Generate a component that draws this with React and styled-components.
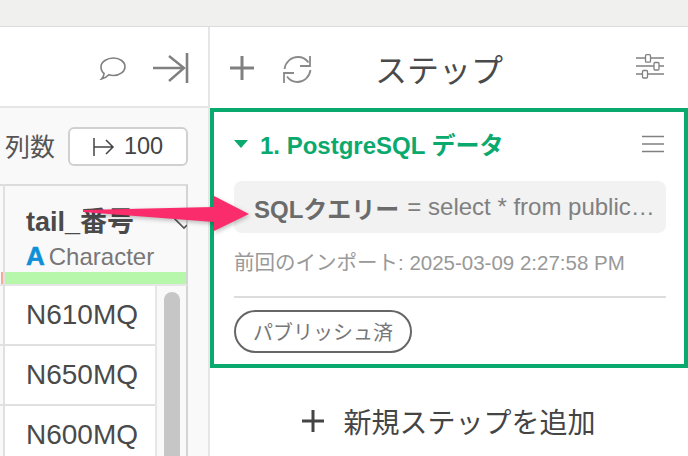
import React from "react";
import styled, { createGlobalStyle } from "styled-components";

const GlobalStyle = createGlobalStyle`
  html, body {
    margin: 0;
    padding: 0;
    background: #fff;
    font-family: "Liberation Sans", "Noto Sans CJK JP", sans-serif;
  }
`;

const Page = styled.div`
  position: relative;
  width: 688px;
  height: 456px;
  overflow: hidden;
  display: flex;
  flex-direction: column;
`;

const TopBar = styled.div`
  height: 26px;
  flex: none;
  background: #f0f0ef;
  border-bottom: 1px solid #dcdcdc;
`;

const Main = styled.div`
  flex: 1;
  min-height: 0;
  display: flex;
`;

const LeftPane = styled.div`
  width: 208px;
  flex: none;
  display: flex;
  flex-direction: column;
  border-right: 2px solid #e6e6e6;
`;

const LeftHeader = styled.div`
  height: 76px;
  flex: none;
  display: flex;
  align-items: center;
  justify-content: flex-end;
  gap: 26px;
  padding: 3px 19px 0 0;
  border-bottom: 2px solid #e6e6e6;
`;

const LeftBody = styled.div`
  flex: 1;
  min-height: 0;
  background: #f9f9f9;
  display: flex;
  flex-direction: column;
  overflow: hidden;
`;

const RowCount = styled.div`
  height: 76px;
  flex: none;
  display: flex;
  align-items: flex-start;
  padding: 19px 0 0 5px;
  box-sizing: border-box;
  gap: 13px;
`;

const CountLabel = styled.span`
  font-size: 25px;
  line-height: 40px;
  color: #555;
`;

const CountButton = styled.div`
  width: 120px;
  height: 39px;
  box-sizing: border-box;
  border: 2px solid #d0d0d0;
  border-radius: 6px;
  background: #fff;
  display: flex;
  align-items: center;
  justify-content: center;
  gap: 9px;
  font-size: 23.5px;
  color: #444;
`;

const Table = styled.div`
  display: grid;
  grid-template-columns: 3px 184px;
  align-items: stretch;
`;

const PrevColumn = styled.div`
  display: flex;
  flex-direction: column;
  border-right: 2px solid #e0e0e0;
  width: 3px;
  box-sizing: content-box;
`;

const PrevHeader = styled.div`
  height: 102px;
  flex: none;
  box-sizing: border-box;
  border-top: 2px solid #dcdcdc;
  border-bottom: 2px solid #e6e6e6;
  display: flex;
  flex-direction: column;
  justify-content: flex-end;
`;

const PrevBar = styled.div`
  height: 12px;
  margin-left: 1px;
  background: #f4a999;
`;

const PrevCell = styled.div`
  height: 58px;
  flex: none;
  border-bottom: 2px solid #e0e0e0;
`;

const Column = styled.div`
  margin-left: 2px;
  width: 183px;
  display: flex;
  flex-direction: column;
`;

const HeaderCell = styled.div`
  height: 102px;
  flex: none;
  box-sizing: border-box;
  border-top: 2px solid #dcdcdc;
  border-right: 2px solid #d4d4d4;
  border-bottom: 2px solid #e6e6e6;
  display: flex;
  flex-direction: column;
  position: relative;
`;

const ColumnName = styled.div`
  font-size: 27px;
  font-weight: 700;
  line-height: 30px;
  color: #4a4a4a;
  padding: 21px 0 0 21px;
`;

const TypeRow = styled.div`
  display: flex;
  align-items: center;
  gap: 4px;
  padding: 6px 0 0 21px;
  font-size: 24px;
  line-height: 27px;
  color: #777;
`;

const TypeBadge = styled.span`
  color: #0f8fd8;
  font-weight: 700;
  font-size: 26px;
  -webkit-text-stroke: 0.5px #0f8fd8;
`;

const Quality = styled.div`
  margin-top: auto;
  height: 12px;
  background: #b6f7ac;
`;

const Chevron = styled.svg`
  position: absolute;
  left: 169px;
  top: 31px;
`;

const BodyRow = styled.div`
  display: flex;
  border-right: 2px solid #d4d4d4;
`;

const Cells = styled.div`
  width: 150px;
  flex: none;
  border-right: 2px solid #e6e6e6;
  background: #fff;
`;

const Cell = styled.div`
  height: 58px;
  border-bottom: 2px solid #e0e0e0;
  display: flex;
  align-items: center;
  padding-left: 21px;
  font-size: 28px;
  color: #4a4a4a;
`;

const ScrollTrack = styled.div`
  flex: 1;
  padding: 6px 6px 0 7px;
`;

const ScrollThumb = styled.div`
  height: 240px;
  border-radius: 8px;
  background: #c6c6c6;
`;

const RightPane = styled.div`
  flex: 1;
  min-width: 0;
  display: flex;
  flex-direction: column;
`;

const RightHeader = styled.div`
  height: 80px;
  flex: none;
  display: flex;
  align-items: center;
  padding: 1px 24px 0 20px;
  gap: 29px;
`;

const StepTitle = styled.div`
  flex: 1;
  font-size: 32px;
  color: #4a4a4a;
  padding-left: 33px;
`;

const StepCard = styled.div`
  height: 260px;
  flex: none;
  box-sizing: border-box;
  border: 4px solid #0aa96e;
  padding: 0 18px 0 20px;
  display: flex;
  flex-direction: column;
`;

const CardHead = styled.div`
  height: 64px;
  flex: none;
  margin-bottom: 5px;
  display: flex;
  align-items: center;
  gap: 12px;
  padding-right: 2px;
`;

const CardTitle = styled.div`
  flex: 1;
  font-size: 24px;
  font-weight: 700;
  color: #0aa96e;
  padding-bottom: 2px;
`;

const QueryBox = styled.div`
  height: 52px;
  flex: none;
  border-radius: 8px;
  background: #f2f2f2;
  display: flex;
  align-items: center;
  padding-left: 20px;
  white-space: nowrap;
  overflow: hidden;
`;

const QueryKey = styled.span`
  font-size: 24px;
  font-weight: 700;
  color: #6b6b6b;
`;

const QueryValue = styled.span`
  font-size: 24px;
  color: #808080;
  margin-left: 8px;
`;

const ImportedAt = styled.div`
  margin-top: 17px;
  font-size: 20.5px;
  line-height: 26px;
  color: #999;
  white-space: nowrap;
`;

const CardRule = styled.div`
  margin-top: 20px;
  height: 2px;
  background: #dcdcdc;
`;

const PublishedTag = styled.div`
  margin-top: 12px;
  align-self: flex-start;
  height: 43px;
  width: 178px;
  box-sizing: border-box;
  border: 2px solid #666;
  border-radius: 22px;
  display: flex;
  align-items: center;
  justify-content: center;
  font-size: 20px;
  color: #777;
`;

const AddStep = styled.div`
  flex: 1;
  display: flex;
  align-items: center;
  justify-content: center;
  gap: 19px;
  font-size: 28px;
  color: #444;
  padding-top: 18px;
`;

const Arrow = styled.svg`
  position: absolute;
  left: 80px;
  top: 190px;
  filter: drop-shadow(1px 2px 2px rgba(0, 0, 0, 0.25));
`;

const Icon = ({ w, h, children, sw = 2, color = "#808080" }) => (
  <svg width={w} height={h} viewBox={`0 0 ${w} ${h}`} fill="none" stroke={color} strokeWidth={sw}>
    {children}
  </svg>
);

export default function App() {
  return (
    <Page>
      <GlobalStyle />
      <TopBar />
      <Main>
        <LeftPane>
          <LeftHeader>
            <Icon w={28} h={24} sw={1.6}>
              <path d="M14.500 2c6.300 0 11.500 3.800 11.500 8.700s-5.200 8.800-11.500 8.800c-1.700 0-3.300-.2-4.700-.7C8 20.800 6 22.300 2.500 23c1.700-1.700 2.500-3.400 2.600-5.500C3 16 2 13.500 2 10.700 2 5.800 8.200 2 14.500 2z" />
            </Icon>
            <Icon w={36} h={32} sw={2.4}>
              <path d="M0 16h31M16 4l15 12-15 13" />
              <path d="M34 1v30" strokeWidth="2.600" />
            </Icon>
          </LeftHeader>
          <LeftBody>
            <RowCount>
              <CountLabel>列数</CountLabel>
              <CountButton>
                <Icon w={22} h={20} color="#444" sw={1.5}>
                  <path d="M1 1v18M1 10h19M13 3l7 7-7 7" />
                </Icon>
                100
              </CountButton>
            </RowCount>
            <Table>
              <PrevColumn>
                <PrevHeader>
                  <PrevBar />
                </PrevHeader>
                <PrevCell />
                <PrevCell />
                <PrevCell />
              </PrevColumn>
              <Column>
                <HeaderCell>
                  <ColumnName>tail_番号</ColumnName>
                  <TypeRow>
                    <TypeBadge>A</TypeBadge>
                    Character
                  </TypeRow>
                  <Quality />
                  <Chevron width="13" height="13" viewBox="0 0 13 13" fill="none" stroke="#555" strokeWidth="1.600">
                    <path d="M0 1l10 10 3-3" />
                  </Chevron>
                </HeaderCell>
                <BodyRow>
                  <Cells>
                    <Cell>N610MQ</Cell>
                    <Cell>N650MQ</Cell>
                    <Cell>N600MQ</Cell>
                  </Cells>
                  <ScrollTrack>
                    <ScrollThumb />
                  </ScrollTrack>
                </BodyRow>
              </Column>
            </Table>
          </LeftBody>
        </LeftPane>
        <RightPane>
          <RightHeader>
            <Icon w={24} h={24} sw={3}>
              <path d="M12 0v24M0 12h24" />
            </Icon>
            <Icon w={30} h={30} color="#8a8a8a" sw={1.8}>
              <path d="M1.500 16C2.500 9 8 4 15 4c4 0 8 2 10.500 5.500" />
              <path d="M27 3v10H17" />
              <path d="M27.500 17c-1 7-6.500 12-13 12-4 0-8-2-10.500-5.500" />
              <path d="M1 30V20h10" />
            </Icon>
            <StepTitle>ステップ</StepTitle>
            <Icon w={28} h={28} sw={1.3}>
              <path d="M0 4h9.500M14.500 4H28M0 12h18M23 12h5M0 20h6.500M11.500 20H28" />
              <rect x="9.500" y="0.700" width="5" height="7.500" rx="1" />
              <rect x="18" y="8.500" width="5" height="7.500" rx="1" />
              <rect x="6.500" y="16.500" width="5" height="7.500" rx="1" />
            </Icon>
          </RightHeader>
          <StepCard>
            <CardHead>
              <svg width="14" height="8" viewBox="0 0 14 8">
                <path d="M0 0h14L7 8z" fill="#0aa96e" />
              </svg>
              <CardTitle>1. PostgreSQL データ</CardTitle>
              <Icon w={22} h={18} sw={1.6}>
                <path d="M0 1.500h22M0 9h22M0 16.500h22" />
              </Icon>
            </CardHead>
            <QueryBox>
              <QueryKey>SQLクエリー</QueryKey>
              <QueryValue>= select * from public…</QueryValue>
            </QueryBox>
            <ImportedAt>前回のインポート: 2025-03-09 2:27:58 PM</ImportedAt>
            <CardRule />
            <PublishedTag>パブリッシュ済</PublishedTag>
          </StepCard>
          <AddStep>
            <Icon w={22} h={22} color="#444" sw={3}>
              <path d="M11 0v22M0 11h22" />
            </Icon>
            新規ステップを追加
          </AddStep>
        </RightPane>
      </Main>
      <Arrow width="175" height="45" viewBox="0 0 175 45">
        <path d="M3 20l130-3 1-11 35 18-35 17v-9L3 22z" fill="#fb2c6c" />
      </Arrow>
    </Page>
  );
}
